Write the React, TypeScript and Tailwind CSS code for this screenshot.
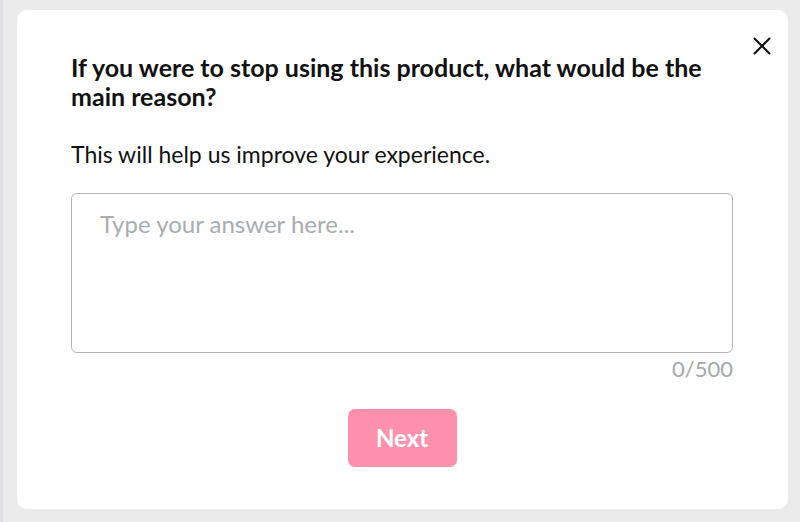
import React, { useState } from "react";

export default function App() {
  const [text, setText] = useState("");

  return (
    <div
      className="h-[522px] w-[800px] bg-[#ebebeb] flex"
      style={{ fontFamily: "Lato, 'Open Sans', sans-serif" }}
    >
      <div className="w-[3px] h-full bg-[#dde1e6]" />
      <div className="pt-[10px] pl-[14px]">
        <div className="relative w-[771px] h-[499px] bg-white rounded-[10px] pl-[54px] pr-[55px] pt-[43px]">
          <button className="absolute top-[26px] right-[16px] w-[20px] h-[20px] text-[#111]">
            <svg viewBox="0 0 20 20" className="w-[20px] h-[20px]" fill="none" stroke="currentColor" strokeWidth="2" strokeLinecap="round">
              <path d="M2.5 2.5 L17.5 17.5 M17.5 2.5 L2.5 17.5" />
            </svg>
          </button>
          <h1 className="text-[25px] leading-[29px] font-bold text-[#111]">
            If you were to stop using this product, what would be the main reason?
          </h1>
          <p className="mt-[28px] text-[23px] leading-[30px] text-[#111]">
            This will help us improve your experience.
          </p>
          <textarea
            value={text}
            onChange={(e) => setText(e.target.value)}
            maxLength={500}
            placeholder="Type your answer here..."
            className="mt-[24px] block w-full h-[160px] resize-none border-[1.5px] border-[#b3b6ba] rounded-[6px] px-[28px] py-[15px] text-[24px] leading-[30px] text-[#111] placeholder:text-[#a9adb2] outline-none"
          />
          <div className="mt-[3px] text-right text-[22px] leading-[26px] text-[#a4a8ad]">
            {text.length}/500
          </div>
          <div className="mt-[27px] flex justify-center">
            <button className="w-[109px] h-[58px] rounded-[7px] bg-[#fd91ac] text-white text-[24px] font-bold">
              Next
            </button>
          </div>
        </div>
      </div>
    </div>
  );
}
